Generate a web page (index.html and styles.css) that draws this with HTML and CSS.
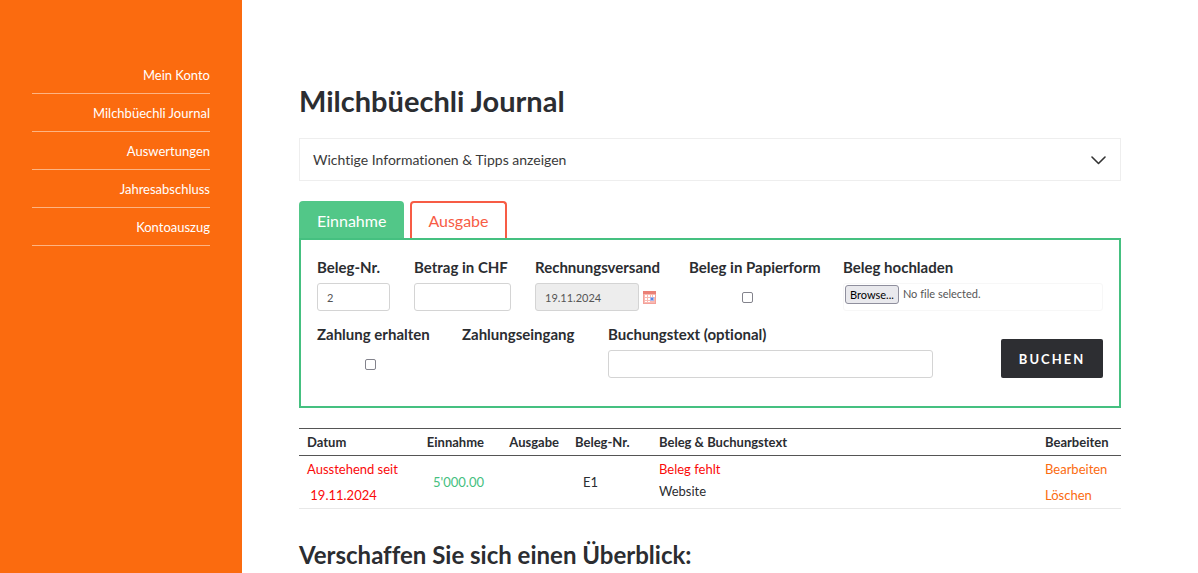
FILE: index.html
```html
<!DOCTYPE html>
<html lang="de">
<head>
<meta charset="utf-8">
<title>Milchbüechli Journal</title>
<link rel="stylesheet" href="styles.css">
</head>
<body>
<div class="page">
  <nav class="sidebar">
    <ul class="menu">
      <li><a href="#">Mein Konto</a></li>
      <li><a href="#">Milchbüechli Journal</a></li>
      <li><a href="#">Auswertungen</a></li>
      <li><a href="#">Jahresabschluss</a></li>
      <li><a href="#">Kontoauszug</a></li>
    </ul>
  </nav>
  <main class="content">
    <h1>Milchbüechli Journal</h1>
    <button type="button" class="info">
      <span>Wichtige Informationen &amp; Tipps anzeigen</span>
      <svg width="16" height="10" viewBox="0 0 16 10" fill="none" stroke="#333" stroke-width="1.6" stroke-linecap="round" stroke-linejoin="round"><path d="M2 2 8.500 8.500 15 2"/></svg>
    </button>
    <div class="tabs">
      <button type="button" class="tab tab-income">Einnahme</button>
      <button type="button" class="tab tab-expense">Ausgabe</button>
    </div>
    <form class="panel">
      <div class="row row-first">
        <div class="field">
          <label for="nr">Beleg-Nr.</label>
          <input class="box" id="nr" type="text" value="2">
        </div>
        <div class="field">
          <label for="amount">Betrag in CHF</label>
          <input class="box" id="amount" type="text">
        </div>
        <div class="field">
          <label for="sent">Rechnungsversand</label>
          <div class="date">
            <input class="box" id="sent" type="text" value="19.11.2024" readonly>
            <button type="button" class="calendar" aria-label="Kalender">
              <svg width="13" height="13" viewBox="0 0 13 13">
                <rect width="13" height="13" fill="#f3a199"/>
                <rect width="13" height="3" fill="#ea8076"/>
                <rect x="1" y="3" width="11" height="9" fill="#f9b9b2"/>
                <path d="M2 4h2v2H2zM5 4h2v2H5zM8 4h1v2H8zM10 4h2v2h-2zM2 7h2v2H2zM5 7h2v2H5zM2 10h2v1H2zM5 10h2v1H5z" fill="#fff"/>
                <rect x="7" y="6" width="4" height="4" fill="#a9b9ee"/>
                <rect x="8" y="7" width="2" height="2" fill="#5c86e4"/>
              </svg>
            </button>
          </div>
        </div>
        <div class="field">
          <label for="paper">Beleg in Papierform</label>
          <div class="tick"><input id="paper" type="checkbox"></div>
        </div>
        <div class="field">
          <label for="upload">Beleg hochladen</label>
          <label class="file" for="upload">
            <input class="file-input" id="upload" type="file">
            <span class="browse">Browse...</span>
            <span>No file selected.</span>
          </label>
        </div>
      </div>
      <div class="row row-second">
        <div class="field">
          <label for="paid">Zahlung erhalten</label>
          <div class="tick"><input id="paid" type="checkbox"></div>
        </div>
        <div class="field"><span class="caption">Zahlungseingang</span></div>
        <div class="field">
          <label for="text">Buchungstext (optional)</label>
          <input class="box" id="text" type="text">
        </div>
        <button type="submit" class="submit">BUCHEN</button>
      </div>
    </form>
    <table class="journal">
      <thead>
        <tr>
          <th class="c-date">Datum</th>
          <th class="c-income">Einnahme</th>
          <th class="c-expense">Ausgabe</th>
          <th class="c-nr">Beleg-Nr.</th>
          <th>Beleg &amp; Buchungstext</th>
          <th class="c-edit">Bearbeiten</th>
        </tr>
      </thead>
      <tbody>
        <tr>
          <td class="open">Ausstehend seit<br>&nbsp;19.11.2024</td>
          <td class="c-income amount">5'000.00</td>
          <td></td>
          <td class="nr">E1</td>
          <td class="text"><span class="missing">Beleg fehlt</span><br>Website</td>
          <td><a href="#">Bearbeiten</a><br><a href="#">Löschen</a></td>
        </tr>
      </tbody>
    </table>
    <h2>Verschaffen Sie sich einen Überblick:</h2>
  </main>
</div>
</body>
</html>
```
FILE: styles.css
```css
* { box-sizing: border-box; }
body {
  margin: 0;
  overflow: hidden;
  background: #fff;
  color: #2b2d31;
  font: 13px/26px Lato, sans-serif;
  font-variant-ligatures: none;
}
button, input { font-family: inherit; font-variant-ligatures: none; margin: 0; }
button { cursor: pointer; }
.page { display: flex; min-height: 100vh; }

.sidebar {
  flex: 0 0 242px;
  padding: 56px 32px;
  background: #fb6b0f;
}
.menu { margin: 0; padding: 0; list-style: none; text-align: right; }
.menu a {
  display: block;
  height: 38px;
  border-bottom: 1px solid #fdb483;
  color: #fff;
  line-height: 38px;
  text-decoration: none;
}

.content { flex: 1; min-width: 0; padding: 81px 77px 0 57px; }
h1, h2 { margin: 0; font-weight: 700; }
h1 { font-size: 29px; line-height: 40px; }
h2 { margin-top: 26px; font-size: 24px; line-height: 40px; }

.info {
  display: flex;
  align-items: center;
  justify-content: space-between;
  width: 100%;
  height: 43px;
  margin-top: 17px;
  padding: 0 14px 0 13px;
  border: 1px solid #eee;
  background: #fff;
  color: #3a3a3a;
  font-size: 14px;
}

.tabs { display: flex; gap: 6px; margin-top: 20px; }
.tab {
  height: 37px;
  padding: 0 16px;
  border: 2px solid;
  border-bottom: 0;
  border-radius: 4px 4px 0 0;
  font-size: 16px;
}
.tab-income { border-color: #52c788; background: #52c788; color: #fff; }
.tab-expense { border-color: #f75c45; background: #fff; color: #f75c45; }

.panel {
  padding: 17px 16px 28px;
  border: 2px solid #45c080;
}
.row { display: grid; gap: 24px; }
.row-first { grid-template-columns: 73px 97px 130px 130px minmax(0, 1fr); }
.row-second { grid-template-columns: 121px 122px 325px minmax(0, 1fr); margin-top: 13px; }
.field { display: flex; flex-direction: column; gap: 6px; }
.field > label:first-child, .caption {
  font-size: 15px;
  font-weight: 700;
  line-height: 20px;
  white-space: nowrap;
}
.box {
  width: 100%;
  height: 28px;
  padding: 0 9px;
  border: 1px solid #d4d4d4;
  border-radius: 3px;
  background: #fff;
  color: #555;
  font-size: 11px;
}
.box:read-only { background: #ededed; }
.date { display: flex; align-items: center; gap: 4px; }
.date .box { width: 104px; }
.calendar { display: flex; padding: 0; border: 0; background: none; }
.tick { display: flex; align-items: center; justify-content: center; height: 28px; }
.row-first .tick { width: 117px; }
.row-second .tick { width: 107px; }
.tick input {
  width: 11px;
  height: 11px;
  appearance: none;
  border: 1px solid #83838c;
  border-radius: 2px;
  background: #fff;
}
.tick input:checked { background: #52c788; }
.file {
  display: flex;
  gap: 4px;
  height: 28px;
  padding: 1px;
  border: 1px solid #f7f7f7;
  border-radius: 3px;
  color: #555;
  font-size: 11px;
  line-height: 18px;
}
.file-input { position: absolute; width: 1px; height: 1px; opacity: 0; }
.browse {
  height: 19px;
  padding: 0 4px;
  border: 1px solid #8f8f9d;
  border-radius: 3px;
  background: #e9e9ed;
  color: #000;
  line-height: 17px;
}
.submit {
  align-self: end;
  justify-self: end;
  width: 102px;
  height: 39px;
  padding: 0;
  border: 0;
  border-radius: 2px;
  background: #2d2e32;
  color: #fff;
  font-size: 13px;
  font-weight: 700;
  letter-spacing: 2px;
}

.journal { width: 100%; margin-top: 20px; border-collapse: collapse; table-layout: fixed; }
.journal th, .journal td { padding: 0 8px; text-align: left; }
.journal th {
  height: 27px;
  border-top: 1px solid #555;
  border-bottom: 1px solid #555;
  font-weight: 700;
  white-space: nowrap;
}
.journal td { height: 52px; border-bottom: 1px solid #e8e8e8; }
.c-date { width: 109px; }
.c-income { width: 84px; }
.journal .c-income, .journal .c-expense { text-align: right; }
.c-expense { width: 75px; }
.c-nr { width: 84px; }
.c-edit { width: 84px; }
.journal .open, .missing { color: #fa0a0a; }
.journal .amount { color: #45c080; }
.journal .nr { padding-left: 16px; }
.journal .text { padding-bottom: 4px; line-height: 22px; }
.journal a { color: #fb6b0f; text-decoration: none; }
```
